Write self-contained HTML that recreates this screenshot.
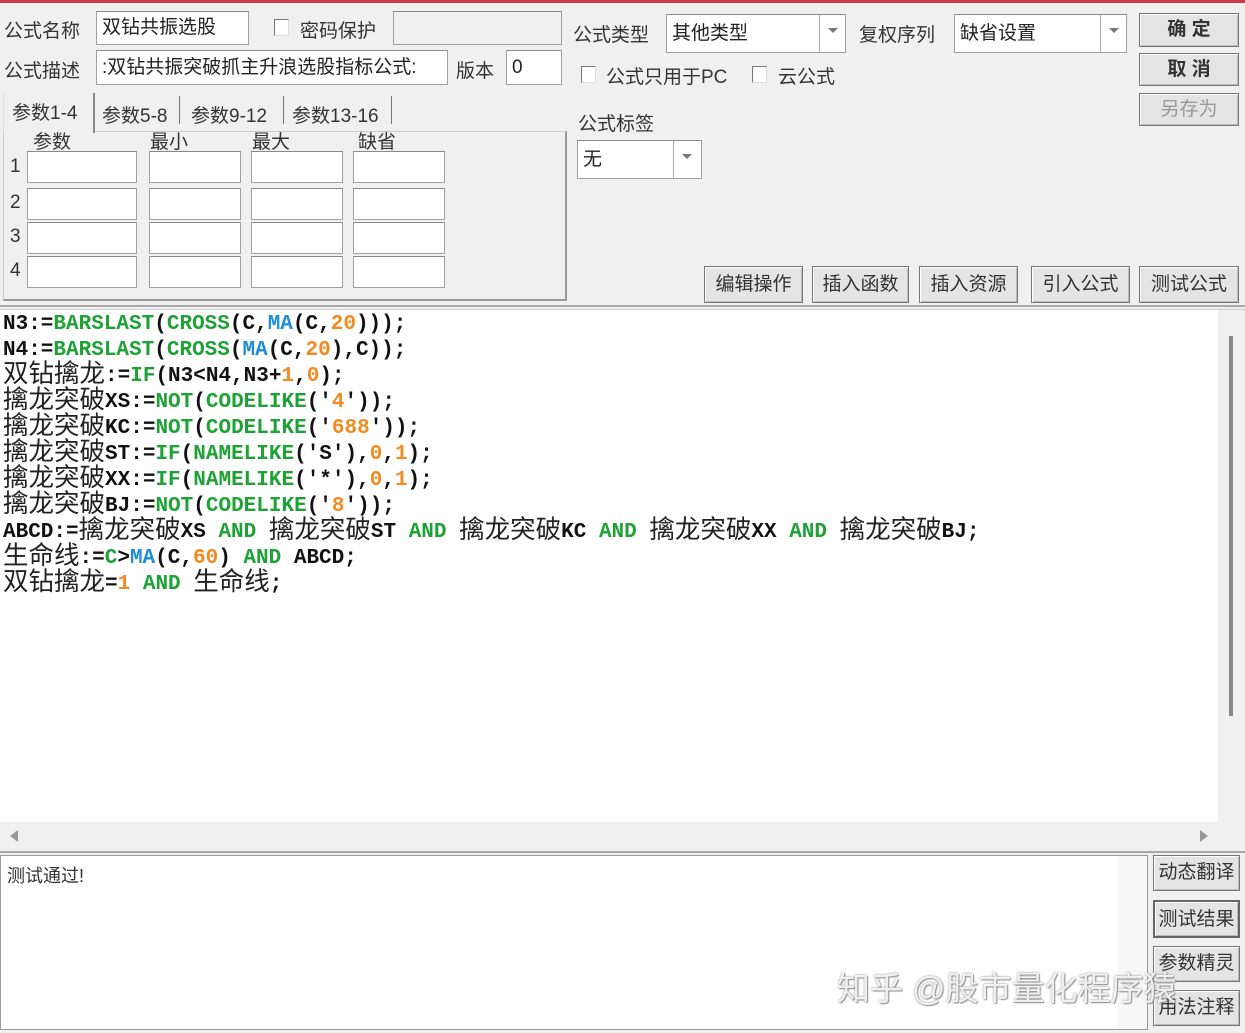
<!DOCTYPE html>
<html><head><meta charset="utf-8"><style>
*{box-sizing:border-box;margin:0;padding:0}
body{width:1245px;height:1033px;background:#f0f0f0;position:relative;overflow:hidden;font-family:"Liberation Sans","Noto Sans CJK SC",sans-serif;font-size:19px;color:#222}
.a{position:absolute}
.in{position:absolute;background:#fff;border:1px solid #a0a0a0;border-top-color:#8a8a8a;padding:0 5px;white-space:nowrap;overflow:hidden;line-height:30px}
.lbl{position:absolute;white-space:nowrap;color:#333}
.cb{position:absolute;width:15px;height:17px;border:1px solid #777;border-right-color:#ddd;border-bottom-color:#ddd;background:#fff}
.btn{position:absolute;border:1px solid #777;background:#e4e4e4;box-shadow:inset 1px 1px 0 #fff,inset -1px -1px 0 #bbb;text-align:center;white-space:nowrap;color:#333}
.dd{position:absolute;right:0;top:0;bottom:0;width:26px;border-left:1px solid #aaa;background:#fff}
.dd:after{content:"";position:absolute;left:8px;top:13px;border:5px solid transparent;border-top:5px solid #777}
.code{position:absolute;left:3px;top:312px;font-family:"Liberation Mono",monospace;font-weight:bold;font-size:21px;color:#111}
.code div{height:26px;line-height:26px;overflow:visible;white-space:pre}
.code .z{font-family:"Noto Sans CJK SC",sans-serif;font-weight:normal;font-size:25.5px;line-height:20px;display:inline-block;height:26px;vertical-align:top;position:relative;top:-2px;color:#222}
.g{color:#1ea236}.b{color:#1d8fd6}.o{color:#f38a1f}
</style></head><body>
<div class="a" style="left:0;top:0;width:1245px;height:3px;background:#c9404a"></div>

<div class="lbl" style="left:4px;top:16px">公式名称</div>
<div class="in" style="left:96px;top:11px;width:153px;height:34px;line-height:32px">双钻共振选股</div>
<div class="cb" style="left:274px;top:19px"></div>
<div class="lbl" style="left:300px;top:16px">密码保护</div>
<div class="in" style="left:393px;top:11px;width:169px;height:34px;background:#f0f0f0"></div>

<div class="lbl" style="left:4px;top:56px">公式描述</div>
<div class="in" style="left:96px;top:50px;width:352px;height:35px;line-height:33px">:双钻共振突破抓主升浪选股指标公式:</div>
<div class="lbl" style="left:456px;top:56px">版本</div>
<div class="in" style="left:506px;top:50px;width:56px;height:35px;line-height:33px">0</div>

<div class="lbl" style="left:573px;top:20px">公式类型</div>
<div class="in" style="left:666px;top:14px;width:180px;height:39px;line-height:37px">其他类型<div class="dd"></div></div>
<div class="lbl" style="left:859px;top:20px">复权序列</div>
<div class="in" style="left:954px;top:14px;width:173px;height:39px;line-height:37px">缺省设置<div class="dd"></div></div>
<div class="cb" style="left:581px;top:66px"></div>
<div class="lbl" style="left:606px;top:62px">公式只用于PC</div>
<div class="cb" style="left:752px;top:66px"></div>
<div class="lbl" style="left:778px;top:62px">云公式</div>
<div class="lbl" style="left:578px;top:109px">公式标签</div>
<div class="in" style="left:577px;top:140px;width:125px;height:39px;line-height:37px">无<div class="dd" style="width:28px"></div></div>

<div class="btn" style="left:1139px;top:13px;width:100px;height:34px;line-height:32px;font-weight:bold">确 定</div>
<div class="btn" style="left:1139px;top:53px;width:100px;height:33px;line-height:31px;font-weight:bold">取 消</div>
<div class="btn" style="left:1139px;top:93px;width:100px;height:33px;line-height:31px;color:#999">另存为</div>

<div class="a" style="left:3px;top:131px;width:564px;height:170px;border:1px solid #ccc;border-right:2px solid #999;border-bottom:2px solid #999"></div>
<div class="a" style="left:3px;top:93px;width:92px;height:40px;background:#f0f0f0;border-right:2px solid #888;border-left:1px solid #ddd"></div>
<div class="lbl" style="left:12px;top:98px;color:#333">参数1-4</div>
<div class="lbl" style="left:102px;top:101px">参数5-8</div>
<div class="a" style="left:179px;top:96px;width:1px;height:28px;background:#777"></div>
<div class="lbl" style="left:191px;top:101px">参数9-12</div>
<div class="a" style="left:283px;top:96px;width:1px;height:28px;background:#777"></div>
<div class="lbl" style="left:292px;top:101px">参数13-16</div>
<div class="a" style="left:391px;top:96px;width:1px;height:28px;background:#777"></div>
<div class="lbl" style="left:33px;top:127px">参数</div>
<div class="lbl" style="left:150px;top:127px">最小</div>
<div class="lbl" style="left:252px;top:127px">最大</div>
<div class="lbl" style="left:358px;top:127px">缺省</div>
<div class="lbl" style="left:10px;top:156px">1</div><div class="lbl" style="left:10px;top:192px">2</div><div class="lbl" style="left:10px;top:226px">3</div><div class="lbl" style="left:10px;top:260px">4</div>
<div class="in" style="left:27px;top:151px;width:110px;height:32px"></div><div class="in" style="left:149px;top:151px;width:92px;height:32px"></div><div class="in" style="left:251px;top:151px;width:92px;height:32px"></div><div class="in" style="left:353px;top:151px;width:92px;height:32px"></div>
<div class="in" style="left:27px;top:188px;width:110px;height:32px"></div><div class="in" style="left:149px;top:188px;width:92px;height:32px"></div><div class="in" style="left:251px;top:188px;width:92px;height:32px"></div><div class="in" style="left:353px;top:188px;width:92px;height:32px"></div>
<div class="in" style="left:27px;top:222px;width:110px;height:32px"></div><div class="in" style="left:149px;top:222px;width:92px;height:32px"></div><div class="in" style="left:251px;top:222px;width:92px;height:32px"></div><div class="in" style="left:353px;top:222px;width:92px;height:32px"></div>
<div class="in" style="left:27px;top:256px;width:110px;height:32px"></div><div class="in" style="left:149px;top:256px;width:92px;height:32px"></div><div class="in" style="left:251px;top:256px;width:92px;height:32px"></div><div class="in" style="left:353px;top:256px;width:92px;height:32px"></div>

<div class="btn" style="left:704px;top:266px;width:99px;height:37px;line-height:35px">编辑操作</div>
<div class="btn" style="left:812px;top:266px;width:97px;height:37px;line-height:35px">插入函数</div>
<div class="btn" style="left:919px;top:266px;width:99px;height:37px;line-height:35px">插入资源</div>
<div class="btn" style="left:1031px;top:266px;width:99px;height:37px;line-height:35px">引入公式</div>
<div class="btn" style="left:1139px;top:266px;width:100px;height:37px;line-height:35px">测试公式</div>

<div class="a" style="left:0;top:305px;width:1245px;height:5px;border-top:2px solid #a8a8a8;border-bottom:1px solid #ccc"></div>
<div class="a" style="left:0;top:310px;width:1218px;height:512px;background:#fff"></div>
<div class="a" style="left:1218px;top:310px;width:27px;height:512px;background:#f0f0f0"></div>
<div class="a" style="left:1229px;top:336px;width:4px;height:380px;background:#888"></div>
<div class="a" style="left:0;top:822px;width:1218px;height:28px;background:#f0f0f0"></div>
<div class="a" style="left:10px;top:830px;border:6px solid transparent;border-right:8px solid #999;border-left:0"></div>
<div class="a" style="left:1200px;top:830px;border:6px solid transparent;border-left:8px solid #999;border-right:0"></div>
<div class="code"><div>N3:=<span class="g">BARSLAST</span>(<span class="g">CROSS</span>(C,<span class="b">MA</span>(C,<span class="o">20</span>)));</div><div>N4:=<span class="g">BARSLAST</span>(<span class="g">CROSS</span>(<span class="b">MA</span>(C,<span class="o">20</span>),C));</div><div><span class="z">双钻擒龙</span>:=<span class="g">IF</span>(N3&lt;N4,N3+<span class="o">1</span>,<span class="o">0</span>);</div><div><span class="z">擒龙突破</span>XS:=<span class="g">NOT</span>(<span class="g">CODELIKE</span>('<span class="o">4</span>'));</div><div><span class="z">擒龙突破</span>KC:=<span class="g">NOT</span>(<span class="g">CODELIKE</span>('<span class="o">688</span>'));</div><div><span class="z">擒龙突破</span>ST:=<span class="g">IF</span>(<span class="g">NAMELIKE</span>('S'),<span class="o">0</span>,<span class="o">1</span>);</div><div><span class="z">擒龙突破</span>XX:=<span class="g">IF</span>(<span class="g">NAMELIKE</span>('*'),<span class="o">0</span>,<span class="o">1</span>);</div><div><span class="z">擒龙突破</span>BJ:=<span class="g">NOT</span>(<span class="g">CODELIKE</span>('<span class="o">8</span>'));</div><div>ABCD:=<span class="z">擒龙突破</span>XS <span class="g">AND</span> <span class="z">擒龙突破</span>ST <span class="g">AND</span> <span class="z">擒龙突破</span>KC <span class="g">AND</span> <span class="z">擒龙突破</span>XX <span class="g">AND</span> <span class="z">擒龙突破</span>BJ;</div><div><span class="z">生命线</span>:=<span class="g">C</span>&gt;<span class="b">MA</span>(C,<span class="o">60</span>) <span class="g">AND</span> ABCD;</div><div><span class="z">双钻擒龙</span>=<span class="o">1</span> <span class="g">AND</span> <span class="z">生命线</span>;</div></div>

<div class="a" style="left:0;top:851px;width:1245px;height:4px;border-top:2px solid #a8a8a8"></div>
<div class="a" style="left:0;top:855px;width:1148px;height:175px;background:#fff;border:1px solid #999"></div>
<div class="a" style="left:1118px;top:856px;width:29px;height:173px;background:#f7f7f7"></div>
<div class="lbl" style="left:7px;top:862px;font-size:18px">测试通过!</div>
<div class="btn" style="left:1153px;top:855px;width:87px;height:36px;line-height:34px">动态翻译</div>
<div class="btn" style="left:1153px;top:900px;width:87px;height:38px;line-height:36px;border:2px solid #666">测试结果</div>
<div class="btn" style="left:1153px;top:946px;width:87px;height:36px;line-height:34px">参数精灵</div>
<div class="btn" style="left:1153px;top:990px;width:87px;height:36px;line-height:34px">用法注释</div>
<div class="lbl" style="left:837px;top:962px;font-size:33px;color:rgba(255,255,255,0.85);text-shadow:0 0 2px #888,1px 1px 1px #999">知乎 @股市量化程序猿</div>
</body></html>
